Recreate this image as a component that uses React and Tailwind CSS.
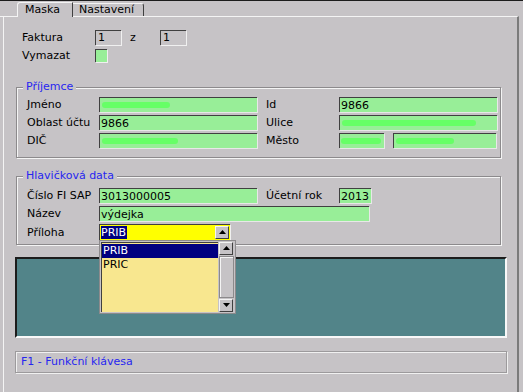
import React from "react";

// sunken green edit box
function Field({ w, value, smudge, children }) {
  return (
    <div
      className={`relative h-[15px] bg-[#98ee98] border-t border-l border-[#404040] shadow-[1px_1px_0_#e8e8e8] flex items-center pl-[1px] overflow-hidden ${w}`}
    >
      {value && <span className="leading-[13px]">{value}</span>}
      {smudge && (
        <span className={`absolute top-[4px] h-[6px] rounded-full bg-[#66ff66] blur-[0.6px] ${smudge}`} />
      )}
      {children}
    </div>
  );
}

function GrayBox({ value }) {
  return (
    <div className="w-[26px] h-[15px] border-t border-l border-[#404040] shadow-[1px_1px_0_#f0f0f0] bg-[#c6c3c6] pl-[2px] leading-[13px]">
      {value}
    </div>
  );
}

function Group({ title, h, children }) {
  return (
    <div
      className={`relative ml-[12px] w-[485px] border border-[#8c8a8c] shadow-[inset_1px_1px_0_#f4f4f4,1px_1px_0_#f4f4f4] ${h}`}
    >
      <span className="absolute -top-[8px] left-[6px] px-[3px] bg-[#c6c3c6] text-[#2626f0] leading-[14px]">
        {title}
      </span>
      {children}
    </div>
  );
}

function Label({ w = "w-[72px]", children }) {
  return <span className={`${w} shrink-0 leading-[15px]`}>{children}</span>;
}

function ArrowBtn({ up = true }) {
  return (
    <div className="w-[14px] h-[13px] bg-[#c6c3c6] border-t border-l border-[#f4f4f4] border-r border-b border-r-[#404040] border-b-[#404040] flex items-center justify-center">
      <svg width="7" height="5" viewBox="0 0 7 5">
        {up ? (
          <path d="M3.5 0 L7 4 L0 4 Z" fill="#000" />
        ) : (
          <path d="M0 0 L7 0 L3.5 4 Z" fill="#000" />
        )}
      </svg>
    </div>
  );
}

export default function App() {
  return (
    <div
      className="w-[523px] h-[392px] bg-[#c6c3c6] border-t border-[#1c1c1c] overflow-hidden text-[11px] text-black"
      style={{ fontFamily: '"DejaVu Sans", Verdana, sans-serif' }}
    >
      {/* tabs */}
      <div className="h-[15px] flex items-end">
        <div className="w-[17px] h-[1px] mb-[-1px] bg-[#f4f4f4] self-end" />
        <div className="relative z-10 h-[15px] w-[56px] bg-[#c6c3c6] border-t border-l border-[#f4f4f4] border-r border-r-[#404040] rounded-tl-[3px] pl-[7px] leading-[13px] mb-[-1px]">
          Maska
        </div>
        <div className="h-[13px] w-[71px] border-t border-[#f4f4f4] border-r border-r-[#404040] rounded-tr-[3px] pl-[6px] leading-[12px]">
          Nastavení
        </div>
      </div>

      {/* tab page */}
      <div className="ml-[3px] w-[516px] h-[376px] border-t border-l border-[#f4f4f4] border-r-2 border-r-[#7b7b7b]">
        <div className="pt-[13px] pl-[18px] flex items-center">
          <Label w="w-[73px]">Faktura</Label>
          <GrayBox value="1" />
          <span className="ml-[9px] w-[30px] leading-[15px]">z</span>
          <GrayBox value="1" />
        </div>
        <div className="mt-[3px] pl-[18px] flex items-center">
          <Label w="w-[73px]">Vymazat</Label>
          <div className="w-[12px] h-[13px] bg-[#98ee98] border-t border-l border-[#404040] shadow-[1px_1px_0_#f0f0f0]" />
        </div>

        <div className="mt-[24px]">
          <Group title="Příjemce" h="h-[71px]">
            <div className="pt-[9px] pl-[10px] flex flex-col gap-[3px]">
              <div className="flex items-center">
                <Label>Jméno</Label>
                <Field w="w-[158px]" smudge="left-[2px] w-[68px]" />
                <span className="ml-[9px] w-[73px] leading-[15px]">Id</span>
                <Field w="w-[158px]" value="9866" />
              </div>
              <div className="flex items-center">
                <Label>Oblast účtu</Label>
                <Field w="w-[158px]" value="9866" />
                <span className="ml-[9px] w-[73px] leading-[15px]">Ulice</span>
                <Field w="w-[158px]" smudge="left-[2px] w-[134px]" />
              </div>
              <div className="flex items-center">
                <Label>DIČ</Label>
                <Field w="w-[158px]" smudge="left-[2px] w-[76px]" />
                <span className="ml-[9px] w-[73px] leading-[15px]">Město</span>
                <Field w="w-[45px]" smudge="left-[1px] w-[40px]" />
                <div className="w-[9px]" />
                <Field w="w-[103px]" smudge="left-[2px] w-[58px]" />
              </div>
            </div>
          </Group>
        </div>

        <div className="mt-[18px]">
          <Group title="Hlavičková data" h="h-[69px]">
            <div className="pt-[11px] pl-[10px] flex flex-col gap-[3px]">
              <div className="flex items-center">
                <Label>Číslo FI SAP</Label>
                <Field w="w-[158px]" value="3013000005" />
                <span className="ml-[9px] w-[73px] leading-[15px]">Účetní rok</span>
                <Field w="w-[32px]" value="2013" />
              </div>
              <div className="flex items-center">
                <Label>Název</Label>
                <Field w="w-[270px]" value="výdejka" />
              </div>
              <div className="flex items-center">
                <Label>Příloha</Label>
                <div className="relative">
                  <div className="w-[131px] h-[16px] bg-[#ffff00] border-t border-l border-[#404040] shadow-[1px_1px_0_#f0f0f0] flex items-center justify-between pl-[1px] pr-[1px]">
                    <span className="bg-[#000080] text-white leading-[13px] pr-[1px]">PRIB</span>
                    <ArrowBtn />
                  </div>
                  {/* open list */}
                  <div className="absolute top-[16px] left-0 z-10 w-[137px] h-[74px] bg-[#c6c3c6] border border-[#8c8a8c] p-[1px] flex">
                    <div className="flex-1 bg-[#f8e78f] border-t border-l border-[#404040] flex flex-col pt-[1px]">
                      <span className="bg-[#000080] text-white leading-[14px] pl-[1px]">PRIB</span>
                      <span className="leading-[14px] pl-[1px]">PRIC</span>
                    </div>
                    <div className="w-[15px] flex flex-col justify-between bg-[#c6c3c6] ml-[1px]">
                      <ArrowBtn />
                      <div className="flex-1 my-[1px] border border-[#8c8a8c] bg-[#c6c3c6] shadow-[inset_1px_1px_0_#f4f4f4]" />
                      <ArrowBtn up={false} />
                    </div>
                  </div>
                </div>
              </div>
            </div>
          </Group>
        </div>

        {/* teal area */}
        <div className="mt-[12px] ml-[11px] w-[492px] h-[81px] bg-[#528489] border-t-2 border-l-2 border-[#1c1c1c] border-r-2 border-b-2 border-r-[#f8f8f8] border-b-[#f8f8f8]" />

        {/* status */}
        <div className="mt-[13px] ml-[11px] w-[492px] h-[22px] border border-[#9c9a9c] shadow-[inset_1px_1px_0_#f0f0f0,1px_1px_0_#f0f0f0] flex items-center pl-[5px] text-[#2626f0]">
          F1 - Funkční klávesa
        </div>
      </div>
    </div>
  );
}
